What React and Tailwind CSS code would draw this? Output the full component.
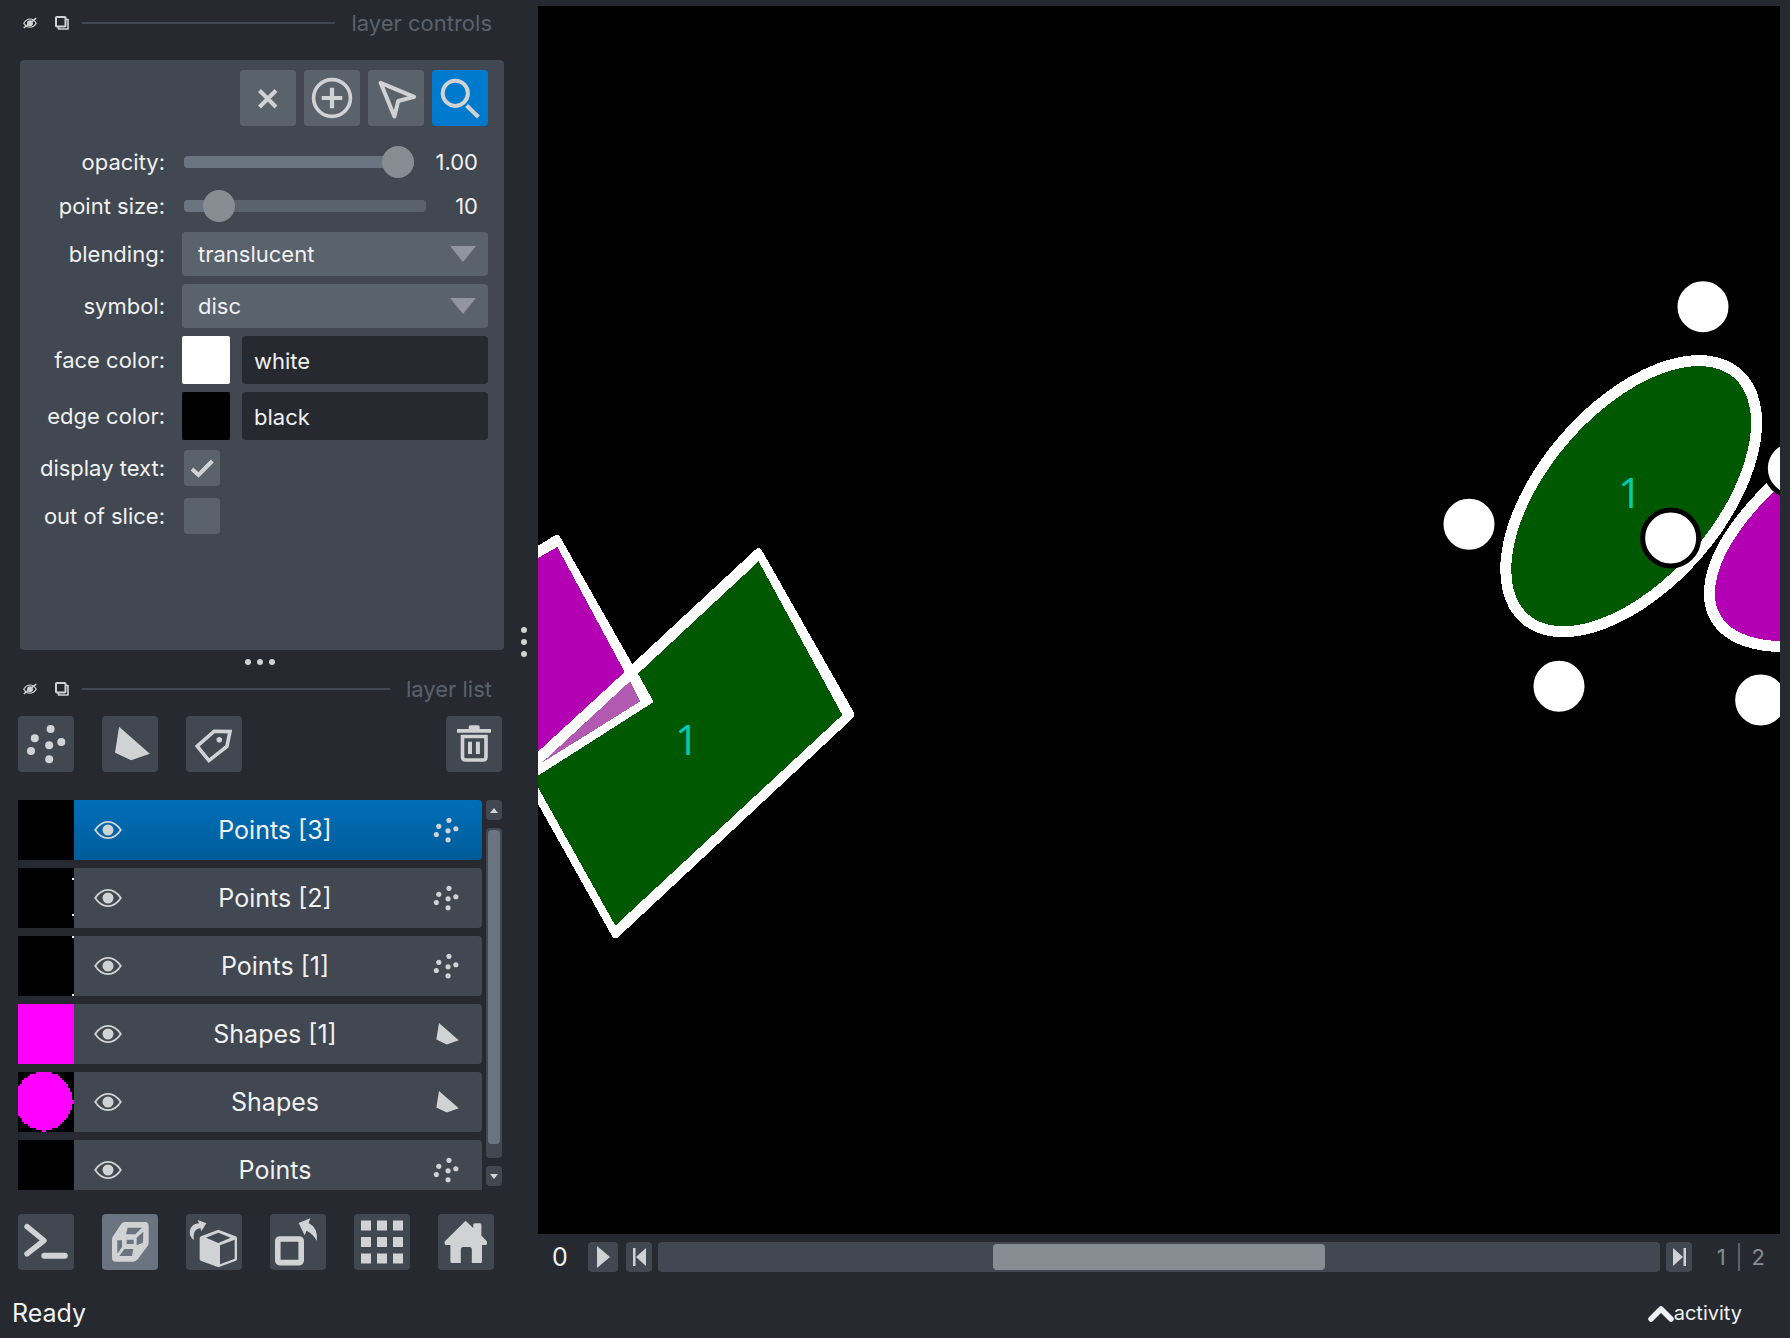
import { useState } from "react";

const ICON = "#d1d2d4";

/* ---------- icons ---------- */

function Svg({ children, className = "size-14", viewBox = "0 0 56 56" }) {
  return (
    <svg viewBox={viewBox} className={className} fill="none" aria-hidden="true">
      {children}
    </svg>
  );
}

const PointsShape = () => (
  <g fill={ICON}>
    {[[32.6, 13], [16.8, 22.3], [43.3, 26], [31.2, 29.3], [13, 35], [31.2, 43.3]].map(([x, y]) => (
      <circle key={x + "-" + y} cx={x} cy={y} r="4" />
    ))}
  </g>
);

const PolygonShape = () => <path d="M17.1 10.7 47.8 37.7 29.2 44.3 13 36.7Z" fill={ICON} />;

const CrossIcon = () => (
  <Svg><path d="M19.500 20.5 36 37M36 20.5 19.500 37" stroke={ICON} strokeWidth="4" /></Svg>
);

const AddIcon = () => (
  <Svg>
    <circle cx="28" cy="28" r="18.4" stroke={ICON} strokeWidth="3.6" />
    <path d="M17.7 28H38.3M28 17.8V38.2" stroke={ICON} strokeWidth="4.2" />
  </Svg>
);

const SelectIcon = () => (
  <Svg>
    <path d="M12.6 12.8 46.2 26.8 30.2 31 26.4 46.5Z" stroke={ICON} strokeWidth="4" strokeLinejoin="round" />
  </Svg>
);

const ZoomIcon = () => (
  <Svg>
    <circle cx="23.3" cy="23.3" r="12.6" stroke={ICON} strokeWidth="4" />
    <path d="M34.6 35.6 46.4 47" stroke={ICON} strokeWidth="4.2" />
  </Svg>
);

const LabelsIcon = () => (
  <Svg>
    <path d="M11.2 30.2 28.2 15.2 44 15.6 40.9 30.4 22.9 44.6Z" stroke={ICON} strokeWidth="3.6" />
    <circle cx="33.3" cy="23.8" r="2.8" fill={ICON} />
  </Svg>
);

const TrashIcon = () => (
  <Svg>
    <path d="M11 13H22.7V11Q22.7 9.3 24.4 9.3H32Q33.7 9.3 33.7 11V13H45V16.8H11Z" fill={ICON} />
    <path d="M16.5 20.5H40V41Q40 44 37 44H19.5Q16.5 44 16.5 41Z" stroke={ICON} strokeWidth="3.6" />
    <path d="M24 25.7V38M31.9 25.7V38" stroke={ICON} strokeWidth="4" />
  </Svg>
);

const ConsoleIcon = () => (
  <Svg>
    <path d="M9 12.6 26 26.5 9 39.8" stroke={ICON} strokeWidth="5.4" strokeLinecap="round" strokeLinejoin="round" />
    <path d="M26.3 41.8H46.8" stroke={ICON} strokeWidth="6" strokeLinecap="round" />
  </Svg>
);

const CubeIcon = () => (
  <Svg>
    <g transform="translate(-6 -6) scale(.3333)">
      <path
        fillRule="evenodd"
        fill={ICON}
        d="M86 42H146Q158 42 158 54V104Q158 110 154 115L126 153Q120 161 111 161H60Q48 161 48 149V94Q48 88 52 83L74 50Q79 42 86 42ZM95 59 90 79H118L138 59ZM142 71 122 89V112L141 104ZM92 95V108H113V95ZM64 97V137L78 117V97ZM85 123 70 144H108L112 123Z"
      />
    </g>
  </Svg>
);

const RollIcon = () => (
  <Svg>
    <g transform="translate(-6 -6) scale(.3333)">
      <path
        fillRule="evenodd"
        fill={ICON}
        d="M115 65 167 85Q171 87 171 91V153Q171 156 168 158L115 178 62 158Q59 156 59 153V91Q59 87 63 85ZM115 74 78 89 115 105 152 89ZM120 112V169L164 152V95Z"
      />
      <path d="M42 96Q24 84 31 63 38 47 57 46L53 36 79 46 64 70 61 60Q48 63 43 73 39 83 42 96Z" fill={ICON} />
    </g>
  </Svg>
);

const TransposeIcon = () => (
  <Svg>
    <rect x="7.8" y="25" width="23.4" height="23.6" rx="2" stroke={ICON} strokeWidth="5.6" />
    <path d="M28.6 9 40.3 4.2 38.6 9Q48.5 14 46.8 27 43.5 20.5 36.6 16.8L34.6 21.2Z" fill={ICON} />
  </Svg>
);

const GridIcon = () => (
  <Svg>
    {[6.5, 23, 39.5].map((y) =>
      [7, 23, 39].map((x) => <rect key={x + "-" + y} x={x} y={y} width="10" height="10" fill={ICON} />)
    )}
  </Svg>
);

const HomeIcon = () => (
  <Svg>
    <path
      d="M27.6 6.7 35.2 14V11Q35.2 9.3 37 9.3H41.6Q43.4 9.3 43.4 11V21.5L49 27.5V29.5Q49 31 47.5 31H44V47.5Q44 49 42.5 49H33.8V35.5Q33.8 33 31.3 33H25.3Q22.8 33 22.8 35.5V49H14Q12.4 49 12.4 47.5V31H8.2Q6.6 31 6.6 29.5V27.5Z"
      fill={ICON}
    />
  </Svg>
);

const EyeIcon = () => (
  <Svg viewBox="0 0 28 20" className="h-5 w-7">
    <path d="M1.2 10C5 4.200 9 1.900 14 1.900S23 4.200 26.800 10C23 15.800 19 18.100 14 18.100S5 15.800 1.200 10Z" stroke={ICON} strokeWidth="1.800" />
    <circle cx="14" cy="10" r="5.5" fill={ICON} />
  </Svg>
);

const HideIcon = () => (
  <Svg viewBox="0 0 14 12" className="h-3 w-3.5">
    <path d="M.8 6.200C2.500 3.200 4.500 2 7 2S11.500 3.200 13.200 6.200C11.500 9 9.500 10.200 7 10.200S2.500 9 .8 6.200Z" stroke={ICON} strokeWidth="1.200" />
    <circle cx="7" cy="6.200" r="2.900" fill={ICON} />
    <path d="M.8 11 13.200 1.200" stroke={ICON} strokeWidth="1.500" />
  </Svg>
);

const FloatIcon = () => (
  <Svg viewBox="0 0 14 14" className="size-3.5">
    <path d="M11 3.5H13V13H3.5V11" stroke={ICON} strokeWidth="1.6" strokeLinejoin="round" />
    <rect x="1" y="1" width="9.5" height="9.5" rx=".8" stroke={ICON} strokeWidth="2" />
  </Svg>
);

/* ---------- small controls ---------- */

function IconButton({ label, active = "", children }) {
  return (
    <button aria-label={label} className={"size-14 shrink-0 rounded-[4px] " + (active || "bg-[#414851]")}>
      {children}
    </button>
  );
}

function DockTitle({ title }) {
  return (
    <div className="flex h-[30px] items-center pl-[23px] pr-3">
      <button aria-label={"hide " + title}><HideIcon /></button>
      <button aria-label={"float " + title} className="ml-[18px]"><FloatIcon /></button>
      <div className="ml-[13px] h-0.5 flex-1 bg-[#414851]" />
      <h2 className="ml-4 text-[22px] leading-[30px] text-[#5a626c]">{title}</h2>
    </div>
  );
}

function Row({ label, id, height, children }) {
  return (
    <div className={"flex items-center " + height}>
      <label htmlFor={id} className="w-[145px] shrink-0 text-right">{label}</label>
      {children}
    </div>
  );
}

const RANGE =
  "h-8 min-w-0 appearance-none bg-transparent [&::-webkit-slider-runnable-track]:h-3 [&::-webkit-slider-runnable-track]:rounded-[4px] [&::-webkit-slider-runnable-track]:bg-[linear-gradient(to_right,#6a7380_var(--fill),#5a626c_var(--fill))] [&::-webkit-slider-thumb]:-mt-2.5 [&::-webkit-slider-thumb]:size-8 [&::-webkit-slider-thumb]:appearance-none [&::-webkit-slider-thumb]:rounded-full [&::-webkit-slider-thumb]:bg-[#868e93]";

function Slider({ id, min, max, step, initial, digits, valueWidth }) {
  const [value, setValue] = useState(initial);
  const fill = ((value - min) / (max - min)) * 100;
  return (
    <div className="ml-[19px] mr-[26px] flex flex-1 items-center">
      <input
        id={id}
        type="range"
        min={min}
        max={max}
        step={step}
        value={value}
        onChange={(e) => setValue(Number(e.target.value))}
        className={RANGE + " flex-1"}
        style={{ "--fill": fill + "%" }}
      />
      <output htmlFor={id} className={"shrink-0 text-right leading-8 " + valueWidth}>{value.toFixed(digits)}</output>
    </div>
  );
}

function Combo({ id, options }) {
  return (
    <div className="relative ml-[17px] mr-4 flex-1">
      <select id={id} className="h-11 w-full appearance-none rounded-[4px] bg-[#5a626c] px-4">
        {options.map((o) => <option key={o}>{o}</option>)}
      </select>
      <svg viewBox="0 0 26 16" className="pointer-events-none absolute right-3 top-3.5 h-4 w-[26px]" aria-hidden="true">
        <path d="M0 0H26L13 16Z" fill="#9095a0" />
      </svg>
    </div>
  );
}

function ColorField({ id, value, swatch }) {
  return (
    <>
      <button aria-label={"pick " + value} className={"ml-[17px] size-12 shrink-0 rounded-[2px] " + swatch} />
      <input id={id} defaultValue={value} className="ml-3 mr-4 h-12 min-w-0 flex-1 rounded-[4px] bg-[#262930] px-3 pt-0.5" />
    </>
  );
}

function Check({ id, checked }) {
  return (
    <div className="relative ml-[19px] size-9">
      <input id={id} type="checkbox" defaultChecked={checked} className="peer size-9 appearance-none rounded-[4px] bg-[#5a626c]" />
      <svg viewBox="0 0 36 36" className="pointer-events-none absolute inset-0 hidden size-9 peer-checked:block" fill="none" aria-hidden="true">
        <path d="M8 19 14.5 25 28.3 11" stroke={ICON} strokeWidth="4" />
      </svg>
    </div>
  );
}

/* ---------- layer list ---------- */

function discRuns() {
  const runs = [];
  for (let y = 0; y < 30; y++) {
    const dy = (y + 0.5 - 14.5) / 14.7;
    if (Math.abs(dy) > 1) continue;
    const half = Math.sqrt(1 - dy * dy) * 14.3;
    const x0 = Math.max(0, Math.round(12.9 - half));
    runs.push([x0, y, Math.min(27, Math.round(12.9 + half)) - x0]);
  }
  return runs;
}

function Thumbnail({ kind }) {
  return (
    <svg viewBox="0 0 28 30" className="h-[60px] w-14 shrink-0 bg-black" shapeRendering="crispEdges" aria-hidden="true">
      {kind === "two" && <path d="M27 5h1v1h-1zM27 23h1v1h-1z" fill="#fff" />}
      {kind === "corners" && <path d="M27 0h1v1h-1zM27 29h1v1h-1z" fill="#fff" />}
      {kind === "square" && <rect width="28" height="30" fill="#f0f" />}
      {kind === "disc" && (
        <g fill="#f0f">
          {discRuns().map(([x, y, w]) => <rect key={y} x={x} y={y} width={w} height="1" />)}
          <rect x="27" y="14" width="1" height="2" />
          <rect x="12" y="29" width="2" height="1" />
        </g>
      )}
    </svg>
  );
}

const LAYERS = [
  { name: "Points [3]", type: "points", thumb: "empty", selected: true },
  { name: "Points [2]", type: "points", thumb: "two" },
  { name: "Points [1]", type: "points", thumb: "corners" },
  { name: "Shapes [1]", type: "shapes", thumb: "square" },
  { name: "Shapes", type: "shapes", thumb: "disc" },
  { name: "Points", type: "points", thumb: "empty" },
];

function Layer({ layer }) {
  return (
    <li
      className={
        "flex h-[60px] shrink-0 items-center overflow-hidden rounded-r-[4px] " +
        (layer.selected ? "bg-linear-to-b from-[#006fb9] to-[#005c99]" : "bg-[#414851]")
      }
    >
      <Thumbnail kind={layer.thumb} />
      <button aria-label={"toggle " + layer.name} className="ml-5"><EyeIcon /></button>
      <span className="flex-1 text-center text-[25px]">{layer.name}</span>
      <Svg className="mr-[18px] size-9">{layer.type === "points" ? <PointsShape /> : <PolygonShape />}</Svg>
    </li>
  );
}

function ScrollBar() {
  return (
    <div className="ml-1 flex w-4 flex-col pb-1">
      <button aria-label="scroll up" className="flex h-5 items-center justify-center rounded-[4px] bg-[#414851]">
        <Svg viewBox="0 0 8 5" className="h-[5px] w-2"><path d="M0 5 4 0 8 5Z" fill={ICON} /></Svg>
      </button>
      <div className="my-2 flex flex-1 flex-col rounded-[4px] bg-[#414851] px-0.5 pt-0.5 pb-3.5">
        <div className="flex-1 rounded-[4px] bg-[#6a7380]" />
      </div>
      <button aria-label="scroll down" className="flex h-5 items-center justify-center rounded-[4px] bg-[#414851]">
        <Svg viewBox="0 0 8 5" className="h-[5px] w-2"><path d="M0 0 4 5 8 0Z" fill={ICON} /></Svg>
      </button>
    </div>
  );
}

/* ---------- viewer canvas ---------- */

function Canvas() {
  return (
    <svg viewBox="0 0 1242 1228" preserveAspectRatio="xMinYMin slice" className="min-h-0 w-full flex-1 bg-black" role="img" aria-label="viewer canvas">
      <g transform="translate(-18 494) scale(.33333)" shapeRendering="crispEdges">
        <path d="M54 755 705 150 712 144H720L726 152 1002 638V651L291 1315H281L276 1308 54 912Z" fill="#fff" />
        <path d="M54 137 107 105H116L121 112 398 600V608L54 827Z" fill="#fff" />
        <path d="M54 174 112 141 314 516 54 755Z" fill="#b200b2" />
        <path d="M330 544 361 604 66 788Z" fill="#b259b2" />
        <path d="M716 184 967 645 286 1277 54 862V827L398 608V600L354 521Z" fill="#005900" />
      </g>
      <g transform="translate(882 244) scale(.33333)">
        <g shapeRendering="crispEdges" stroke="#fff" strokeWidth="33">
          <ellipse cx="633.5" cy="738.5" rx="487" ry="264" transform="rotate(-49.1 633.5 738.5)" fill="#005900" />
          <ellipse cx="1438.5" cy="779.5" rx="640" ry="289" transform="rotate(-30.6 1438.5 779.5)" fill="#b200b2" />
        </g>
        {[[849, 170], [147, 823], [417, 1309], [1022, 1350], [752, 864], [1120, 655]].map(([x, y]) => (
          <circle key={x} cx={x} cy={y} r="84" fill="#fff" stroke="#000" strokeWidth="15" />
        ))}
      </g>
      <g fill="#00cdb4" fontFamily="Open Sans, sans-serif" fontSize="42" textAnchor="middle">
        <text x="149" y="749">1</text>
        <text x="1092" y="502">1</text>
      </g>
    </svg>
  );
}

function StepButton({ label, width, children }) {
  return (
    <button aria-label={label} className={"flex h-[30px] shrink-0 items-center justify-center rounded-[4px] bg-[#414851] " + width}>
      {children}
    </button>
  );
}

function DimsBar() {
  return (
    <div className="mt-2 flex h-[30px] items-center">
      <label htmlFor="dim-0" className="w-11 text-center text-[25px] leading-[30px]">0</label>
      <div className="ml-1.5 flex flex-1 items-center">
        <StepButton label="play" width="w-[30px]">
          <Svg viewBox="0 0 13 22" className="h-[22px] w-[13px]"><path d="M0 0 13 11 0 22Z" fill={ICON} /></Svg>
        </StepButton>
        <StepButton label="previous" width="ml-2 w-[26px]">
          <Svg viewBox="0 0 13 18" className="h-[18px] w-[13px]"><path d="M0 0H2.5V18H0ZM13 0V18L3 9Z" fill={ICON} /></Svg>
        </StepButton>
        <input
          id="dim-0"
          type="range"
          min="0"
          max="2"
          defaultValue="1"
          className="mx-1.5 h-[30px] min-w-0 flex-1 appearance-none rounded-[4px] bg-[#414851] px-0.5 [&::-webkit-slider-thumb]:h-[26px] [&::-webkit-slider-thumb]:w-[332px] [&::-webkit-slider-thumb]:appearance-none [&::-webkit-slider-thumb]:rounded-[4px] [&::-webkit-slider-thumb]:bg-[#868e93]"
        />
        <StepButton label="next" width="w-[26px]">
          <Svg viewBox="0 0 13 18" className="h-[18px] w-[13px]"><path d="M10.5 0H13V18H10.5ZM0 0 10 9 0 18Z" fill={ICON} /></Svg>
        </StepButton>
      </div>
      <div className="flex w-[88px] items-center justify-end gap-3 pr-[15px] text-[22px] leading-[28px] text-[#868e93]">
        <span>1</span>
        <span className="h-7 w-0.5 bg-[#5a626c]" />
        <span>2</span>
      </div>
    </div>
  );
}

/* ---------- window ---------- */

export default function App() {
  return (
    <div className="flex h-screen flex-col overflow-hidden bg-[#262930] font-['Inter',sans-serif] text-[22px] leading-7 text-[#f0f1f2]">
      <main className="flex min-h-0 flex-1">
        <aside className="flex w-[504px] shrink-0 flex-col pt-2 pb-[18px]">
          <DockTitle title="layer controls" />
          <section className="ml-5 mt-[22px] flex h-[590px] shrink-0 flex-col rounded-[4px] bg-[#414851] pt-2.5">
            <div className="flex justify-end gap-2 pr-4">
              <IconButton label="delete points" active="bg-[#5a626c]"><CrossIcon /></IconButton>
              <IconButton label="add points" active="bg-[#5a626c]"><AddIcon /></IconButton>
              <IconButton label="select points" active="bg-[#5a626c]"><SelectIcon /></IconButton>
              <IconButton label="pan and zoom" active="bg-[#007acc]"><ZoomIcon /></IconButton>
            </div>
            <div className="mt-3.5 flex flex-col">
              <Row label="opacity:" id="opacity" height="h-11"><Slider id="opacity" min={0} max={1} step={0.01} initial={1} digits={2} valueWidth="w-16" /></Row>
              <Row label="point size:" id="size" height="h-11"><Slider id="size" min={1} max={100} step={1} initial={10} digits={0} valueWidth="w-13" /></Row>
              <Row label="blending:" id="blending" height="mt-1 h-11"><Combo id="blending" options={["translucent", "additive", "opaque"]} /></Row>
              <Row label="symbol:" id="symbol" height="mt-2 h-11"><Combo id="symbol" options={["disc", "square", "ring"]} /></Row>
              <Row label="face color:" id="face" height="mt-2 h-12"><ColorField id="face" value="white" swatch="bg-white" /></Row>
              <Row label="edge color:" id="edge" height="mt-2 h-12"><ColorField id="edge" value="black" swatch="bg-black" /></Row>
              <Row label="display text:" id="text" height="mt-2.5 h-9"><Check id="text" checked /></Row>
              <Row label="out of slice:" id="slice" height="mt-3 h-9"><Check id="slice" /></Row>
            </div>
          </section>
          <div className="flex h-6 items-center justify-center gap-1.5" role="separator">
            <span className="ml-4 size-1.5 rounded-full bg-[#d1d2d4]" />
            <span className="size-1.5 rounded-full bg-[#d1d2d4]" />
            <span className="size-1.5 rounded-full bg-[#d1d2d4]" />
          </div>
          <DockTitle title="layer list" />
          <div className="mt-3 flex gap-7 pl-[18px] pr-0.5">
            <IconButton label="new points layer"><Svg><PointsShape /></Svg></IconButton>
            <IconButton label="new shapes layer"><Svg><PolygonShape /></Svg></IconButton>
            <IconButton label="new labels layer"><LabelsIcon /></IconButton>
            <div className="ml-auto flex"><IconButton label="delete layer"><TrashIcon /></IconButton></div>
          </div>
          <div className="mt-7 flex min-h-0 flex-1 pl-[18px] pr-0.5">
            <ul className="flex flex-1 flex-col gap-2 overflow-hidden">
              {LAYERS.map((layer) => <Layer key={layer.name} layer={layer} />)}
            </ul>
            <ScrollBar />
          </div>
          <div className="mt-6 flex gap-7 pl-[18px]">
            <IconButton label="console"><ConsoleIcon /></IconButton>
            <IconButton label="toggle 3D" active="bg-[#6a7380]"><CubeIcon /></IconButton>
            <IconButton label="roll dimensions"><RollIcon /></IconButton>
            <IconButton label="transpose"><TransposeIcon /></IconButton>
            <IconButton label="grid"><GridIcon /></IconButton>
            <IconButton label="home"><HomeIcon /></IconButton>
          </div>
        </aside>
        <div className="flex w-[34px] shrink-0 flex-col justify-center gap-1.5 pb-1 pl-[17px]" role="separator">
          <span className="size-1.5 rounded-full bg-[#d1d2d4]" />
          <span className="size-1.5 rounded-full bg-[#d1d2d4]" />
          <span className="size-1.5 rounded-full bg-[#d1d2d4]" />
        </div>
        <section className="flex min-w-0 flex-1 flex-col pt-1.5 pr-2.5 pb-4">
          <Canvas />
          <DimsBar />
        </section>
      </main>
      <footer className="flex h-[50px] shrink-0 items-center justify-between pl-3 pr-12">
        <span className="text-[25px]">Ready</span>
        <button className="flex items-center text-[20px]">
          <Svg viewBox="0 0 26 17" className="h-[17px] w-[26px]">
            <path d="M3 14 13 4 23 14" stroke="#f0f1f2" strokeWidth="5.5" strokeLinecap="round" strokeLinejoin="round" />
          </Svg>
          activity
        </button>
      </footer>
    </div>
  );
}
